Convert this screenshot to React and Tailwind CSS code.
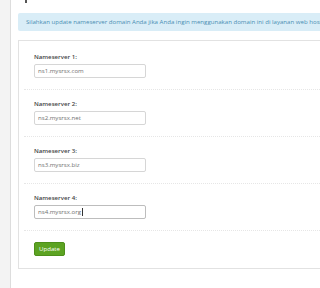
import React from "react";

const servers = [
  { label: "Nameserver 1:", value: "ns1.mysrsx.com" },
  { label: "Nameserver 2:", value: "ns2.mysrsx.net" },
  { label: "Nameserver 3:", value: "ns3.mysrsx.biz" },
  { label: "Nameserver 4:", value: "ns4.mysrsx.org", focused: true },
];

const App = () => {
  return (
    <div className="flex w-[320px] h-[288px] overflow-hidden bg-white font-['Open_Sans',sans-serif]">
      <div className="w-[11px] shrink-0 bg-[#f3f3f3] border-r border-[#dddddd]"></div>
      <div className="flex-1 min-w-0 pl-[7px] overflow-hidden">
        <div className="h-[13px] pl-[7px]">
          <div className="w-[2px] h-[3px] bg-[#555555]"></div>
        </div>
        <div className="w-[400px] h-[18px] flex items-center pl-[8px] bg-[#d9edf7] rounded-[2px] text-[6.1px] text-[#4a8db3] whitespace-nowrap">
          Silahkan update nameserver domain Anda jika Anda ingin menggunakan domain ini di layanan web hosting
        </div>
        <div className="w-[400px] mt-[9px] h-[229px] border border-[#e2e2e2] pt-[2px] px-[5px]">
          {servers.map((s) => (
            <div key={s.label} className="pt-[10px] pb-[11px] px-[10px] border-b border-dotted border-[#e6e6e6]">
              <div className="h-[8px] leading-[8px] text-[6.1px] font-semibold text-[#444444]">{s.label}</div>
              <div
                className={
                  "mt-[3px] w-[112px] h-[14px] flex items-center pl-[3px] rounded-[2px] border text-[6.1px] text-[#707070] " +
                  (s.focused ? "border-[#bdbdbd]" : "border-[#d6d6d6]")
                }
              >
                {s.value}
                {s.focused && <span className="ml-[1px] w-[1px] h-[8px] bg-[#333333]"></span>}
              </div>
            </div>
          ))}
          <div className="pt-[11px] px-[10px]">
            <button className="w-[31px] h-[14px] flex items-center justify-center rounded-[2px] bg-[#5ca322] border border-[#4e8f1b] text-[6.1px] text-white">
              Update
            </button>
          </div>
        </div>
      </div>
    </div>
  );
};

export default App;
